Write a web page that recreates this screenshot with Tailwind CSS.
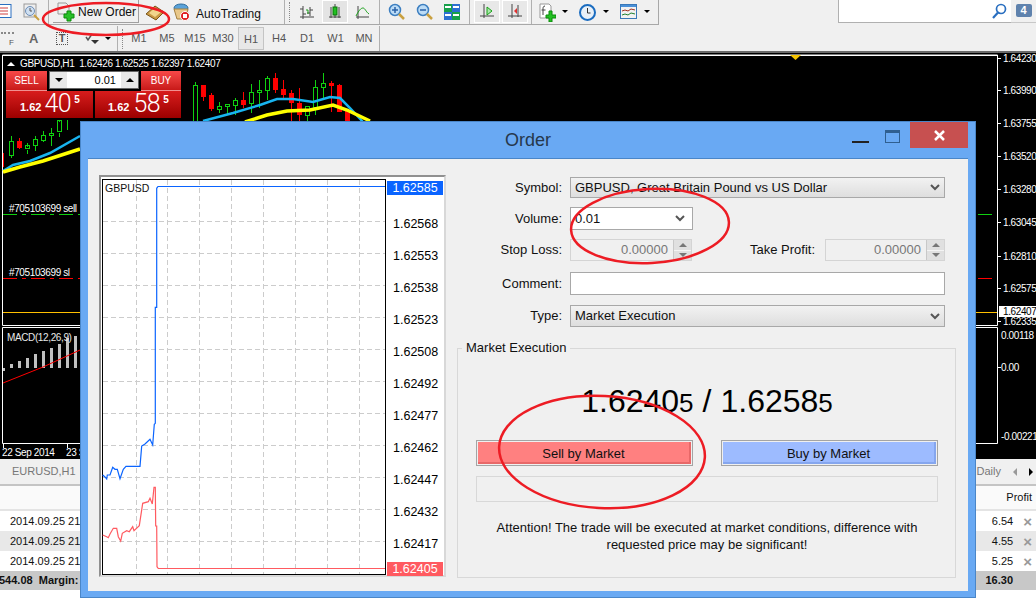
<!DOCTYPE html>
<html lang="en">
<head>
<meta charset="UTF-8">
<title>MetaTrader Order</title>
<script src="https://cdn.jsdelivr.net/npm/@tailwindcss/browser@4"></script>
</head>
<body class="bg-white">
<div class="relative w-[1036px] h-[611px] overflow-hidden bg-white font-['Liberation_Sans',sans-serif] text-[13px] text-[#111]">

  <!-- top toolbar -->
  <div class="flex h-[25px] bg-[#f0f0f0] text-[12px]">
    <div class="flex items-start w-[659px] h-[25px] border-b border-r border-[#a8a8a8] shrink-0">
      <svg class="mt-[4px] shrink-0" width="12" height="15" viewBox="0 0 12 15"><rect x="-4" y="0.5" width="15" height="13" fill="#fff" stroke="#2a6fc0"/><path d="M0 4h8M0 7h8M0 10h8" stroke="#d04040"/></svg>
      <svg class="ml-[11px] mt-[3px] shrink-0" width="18" height="19" viewBox="0 0 18 19"><rect x="1" y="1" width="12" height="13" fill="#eee" stroke="#999"/><circle cx="7" cy="8" r="4.5" fill="#cfe0f2" stroke="#6d8db5"/><path d="M7 5v3h2" stroke="#555" fill="none"/><path d="M11 12l5 5" stroke="#c9a040" stroke-width="2"/></svg>
      <div class="ml-[7px] w-px h-[24px] bg-[#b0b0b0] shrink-0"></div>
      <div class="ml-[4px] flex items-start w-[86px] h-[23px] border-b border-r border-[#a0a0a0] shrink-0">
        <svg class="ml-[4px] mt-[2px] shrink-0" width="18" height="20" viewBox="0 0 18 20"><path d="M1 1h8l3 3v8H1z" fill="#eee" stroke="#999"/><path d="M7 12h3V9h4v3h3v4h-3v3h-4v-3H7z" fill="#28c028" stroke="#0a8a0a"/></svg>
        <span class="ml-[3px] mt-[3px] whitespace-nowrap">New Order</span>
      </div>
      <svg class="ml-[6px] mt-[3px] shrink-0" width="20" height="18" viewBox="0 0 20 18"><path d="M1 11l9-8 9 6-8 8z" fill="#c99a45" stroke="#7a5518"/><path d="M4 10l6-5 6 4-6 5z" fill="#f1d58c"/></svg>
      <svg class="ml-[7px] mt-[3px] shrink-0" width="19" height="19" viewBox="0 0 19 19"><ellipse cx="9" cy="5" rx="7" ry="4" fill="#5aa2d8" stroke="#2f6c9c"/><path d="M2 6h14l-2 10H5z" fill="#e9c88a" stroke="#a5803f"/><circle cx="13" cy="13" r="4.5" fill="#e02020" stroke="#fff"/><rect x="11" y="11" width="4" height="4" fill="#fff"/></svg>
      <span class="ml-[5px] mt-[5px] w-[64px] whitespace-nowrap shrink-0">AutoTrading</span>
      <div class="ml-[24px] w-px h-[24px] bg-[#b0b0b0] shrink-0"></div>
      <div class="ml-[4px] mt-[2px] w-[2px] h-[20px] border-l border-dotted border-[#888] shrink-0"></div>
      <svg class="ml-[8px] mt-[5px] shrink-0" width="16" height="15" viewBox="0 0 16 15"><path d="M4 1v13M1 12h14M11 2v9M4 4H1M4 9h3M11 5h3M11 8H8" stroke="#444" fill="none"/><path d="M7 5h2v4" stroke="#18a018" fill="none"/></svg>
      <div class="ml-[7px] w-[26px] h-[23px] bg-[#e4e4e4] border border-white shrink-0 flex justify-center pt-[3px]">
        <svg width="16" height="15" viewBox="0 0 16 15"><path d="M2 13h12M4 3v11M12 3v11M8 0v3M8 11v3" stroke="#444"/><rect x="6" y="3" width="4" height="8" fill="#20c020" stroke="#0a700a"/></svg>
      </div>
      <svg class="ml-[7px] mt-[5px] shrink-0" width="15" height="15" viewBox="0 0 15 15"><path d="M3 1v13M1 12h13" stroke="#444" fill="none"/><path d="M1 11c3-6 5-8 7-8s3 4 6 6" stroke="#18a018" fill="none"/></svg>
      <div class="ml-[9px] w-px h-[24px] bg-[#b0b0b0] shrink-0"></div>
      <svg class="ml-[8px] mt-[3px] shrink-0" width="17" height="18" viewBox="0 0 17 18"><circle cx="7" cy="7" r="5.5" fill="#bcdcf6" stroke="#3d7fc0" stroke-width="1.5"/><path d="M4 7h6M7 4v6" stroke="#2a62a8" stroke-width="1.5"/><path d="M11 11l5 5" stroke="#c9a040" stroke-width="2.5"/></svg>
      <svg class="ml-[11px] mt-[3px] shrink-0" width="17" height="18" viewBox="0 0 17 18"><circle cx="7" cy="7" r="5.5" fill="#bcdcf6" stroke="#3d7fc0" stroke-width="1.5"/><path d="M4 7h6" stroke="#2a62a8" stroke-width="1.5"/><path d="M11 11l5 5" stroke="#c9a040" stroke-width="2.5"/></svg>
      <svg class="ml-[11px] mt-[4px] shrink-0" width="16" height="16" viewBox="0 0 16 16"><rect width="8" height="8" fill="#17a04a"/><rect x="8" width="8" height="8" fill="#2c6fd0"/><rect y="8" width="8" height="8" fill="#2c6fd0"/><rect x="8" y="8" width="8" height="8" fill="#17a04a"/><path d="M1 3h6M9 3h6M1 11h6M9 11h6" stroke="#fff" stroke-width="2"/></svg>
      <div class="ml-[9px] w-px h-[24px] bg-[#b0b0b0] shrink-0"></div>
      <div class="ml-[4px] w-[26px] h-[23px] bg-[#e8e8e8] border border-white shrink-0 flex justify-center pt-[3px]">
        <svg width="16" height="15" viewBox="0 0 16 15"><path d="M5 0v14M1 12h14" stroke="#444"/><path d="M8 3l5 4-5 4z" fill="#a8e8a8" stroke="#18a018"/></svg>
      </div>
      <div class="ml-[2px] w-[26px] h-[23px] bg-[#e8e8e8] border border-white shrink-0 flex justify-center pt-[3px]">
        <svg width="16" height="15" viewBox="0 0 16 15"><path d="M5 0v14M1 12h14M11 1v12" stroke="#444"/><path d="M7 7l3-3v6z" fill="#e03030"/></svg>
      </div>
      <div class="ml-[3px] w-px h-[24px] bg-[#b0b0b0] shrink-0"></div>
      <svg class="ml-[7px] mt-[3px] shrink-0" width="17" height="19" viewBox="0 0 17 19"><path d="M1 1h9l2 2v12H1z" fill="#fff" stroke="#999"/><path d="M6 3c-2 0-2 2-2 3v6M2.500 7h4" stroke="#444" fill="none"/><path d="M7 12h3V8h3v4h4v3h-4v4h-3v-4H7z" fill="#22c022" stroke="#0a8a0a"/></svg>
      <div class="ml-[6px] mt-[10px] w-0 h-0 border-x-[3px] border-t-[3px] border-x-transparent border-t-black shrink-0"></div>
      <svg class="ml-[11px] mt-[4px] shrink-0" width="17" height="17" viewBox="0 0 17 17"><circle cx="8.5" cy="8.5" r="7.5" fill="#e8f0f8" stroke="#1a6cc0" stroke-width="2"/><path d="M8.5 4v5h3" stroke="#333" fill="none"/></svg>
      <div class="ml-[7px] mt-[10px] w-0 h-0 border-x-[3px] border-t-[3px] border-x-transparent border-t-black shrink-0"></div>
      <svg class="ml-[11px] mt-[4px] shrink-0" width="17" height="15" viewBox="0 0 17 15"><rect x="0.5" y="0.5" width="16" height="14" fill="#f2f2f2" stroke="#3a78b8"/><rect x="1" y="1" width="15" height="2" fill="#4a90d8"/><path d="M2 7l3-1 3 1 3-2 4 1" stroke="#a03020" fill="none"/><path d="M2 11l3-1 3 1 3-2 4 1" stroke="#208030" fill="none"/></svg>
      <div class="ml-[7px] mt-[10px] w-0 h-0 border-x-[3px] border-t-[3px] border-x-transparent border-t-black shrink-0"></div>
    </div>
    <div class="ml-[179px] flex justify-end w-[173px] h-[23px] bg-white border-l border-b border-[#b0b0b0] pt-[3px] pr-[4px] shrink-0">
      <svg width="16" height="16" viewBox="0 0 16 16"><circle cx="10" cy="6" r="4.5" fill="none" stroke="#2a6fc0" stroke-width="1.7"/><path d="M7 9.5L2 15" stroke="#2a6fc0" stroke-width="2.2"/></svg>
    </div>
    <div class="w-[25px] h-[23px] border-b border-[#c8c8c8] flex justify-center pt-[4px]">
      <div class="relative w-[16px] h-[13px] bg-[#5f82ad] rounded-[2px] text-center text-white text-[11px] font-bold leading-[13px]">4</div>
    </div>
  </div>

  <!-- second toolbar -->
  <div class="flex items-center h-[27px] bg-[#f0f0f0] text-[#555]">
    <div class="w-[13px] h-[14px] ml-px border-t-2 border-dotted border-[#888] text-[8px] text-right leading-[18px] shrink-0">F</div>
    <span class="ml-[15px] w-[8px] text-[13px] font-bold text-[#666] shrink-0">A</span>
    <span class="ml-[19px] w-[12px] h-[13px] border border-dotted border-[#555] text-center text-[11px] font-bold leading-[11px] shrink-0">T</span>
    <svg class="ml-[17px] shrink-0" width="14" height="14" viewBox="0 0 14 14"><path d="M1 5l2 3 4-6" stroke="#555" fill="none" stroke-width="1.5"/><path d="M6 8h8l-4 4z" fill="#333"/></svg>
    <div class="ml-[6px] w-0 h-0 border-x-[3px] border-t-[3px] border-x-transparent border-t-black shrink-0"></div>
    <div class="ml-[6px] w-px h-[25px] bg-[#b0b0b0] shrink-0"></div>
    <div class="ml-[4px] w-[2px] h-[20px] border-l border-dotted border-[#888] shrink-0"></div>
    <div class="flex items-center ml-px shrink-0 text-[11px] text-center">
      <span class="w-[28px]">M1</span><span class="w-[28px]">M5</span><span class="w-[28px]">M15</span><span class="w-[28px]">M30</span>
      <span class="w-[26px] h-[23px] leading-[22px] mx-px bg-[#e8e8e8] border border-[#c4c4c4]">H1</span>
      <span class="w-[28px]">H4</span><span class="w-[28px]">D1</span><span class="w-[29px]">W1</span><span class="w-[28px]">MN</span>
    </div>
    <div class="ml-px w-px h-[25px] bg-[#b0b0b0] shrink-0"></div>
  </div>

  <!-- chart window -->
  <div class="relative h-[408px] -mt-px bg-black border-t-2 border-[#6a6a6a] text-white">
    <svg class="absolute left-0 top-0" width="1036" height="406" viewBox="0 53 1036 406" font-size="10" letter-spacing="-0.38">
      <path d="M2.5 55v270.5H997.5V55zM2.5 327.5H997.5V443.500H2.500z" fill="none" stroke="#fff"/>
      <path d="M2.500 55.500H997.500" stroke="#fff"/>
      <path d="M790 55h11l-5.500 5z" fill="#f5c400"/>
      <!-- left candles -->
      <path d="M3.500 153v14" stroke="#f00"/>
      <g fill="none" stroke="#10d010">
        <path d="M11.500 136v5M11.500 156v2"/><rect x="9.500" y="141.500" width="4" height="14"/>
        <path d="M27.500 143v4M27.500 150v4"/><rect x="25.500" y="145.500" width="4" height="3"/>
        <path d="M35.500 136v3M35.500 146v5"/><rect x="33.500" y="139.500" width="4" height="6"/>
        <path d="M43.500 131v4M43.500 140v2"/><rect x="41.500" y="135.500" width="4" height="5"/>
        <path d="M51.500 128v5M51.500 136v10"/><rect x="49.500" y="133.500" width="4" height="2"/>
        <path d="M59.500 120v2M59.500 133v4"/><rect x="57.500" y="120.500" width="4" height="11"/>
        <path d="M67.500 120v10"/>
      </g>
      <path d="M19.500 138v3M19.500 147v2" stroke="#f00"/><rect x="17" y="141" width="5" height="7" fill="#f00"/>
      <polyline points="3,171 13,165 30,161 50,153 80,136" fill="none" stroke="#18b4f0" stroke-width="2.500"/>
      <polyline points="3,172 20,167 43,161 80,149" fill="none" stroke="#ffff00" stroke-width="3.500"/>
      <!-- right candles -->
      <g fill="none" stroke="#10d010">
        <rect x="193.500" y="85.500" width="4" height="37"/><path d="M195.500 82v3"/>
        <path d="M219.500 102v4M219.500 110v3"/><rect x="217.500" y="106.500" width="4" height="3"/>
        <path d="M227.500 107v8"/><rect x="225.500" y="104.500" width="4" height="2"/>
        <path d="M235.500 98v2M235.500 106v9"/><rect x="233.500" y="100.500" width="4" height="5"/>
        <path d="M251.500 84v8M251.500 104v9"/><rect x="249.500" y="92.500" width="4" height="11"/>
        <path d="M259.500 80v10M259.500 93v15"/><rect x="257.500" y="90.500" width="4" height="2"/>
        <path d="M267.500 76v2M267.500 90v10"/><rect x="265.500" y="78.500" width="4" height="12"/>
        <path d="M307.500 116v6"/><rect x="305.500" y="106.500" width="4" height="9"/>
        <path d="M315.500 80v7M315.500 108v7"/><rect x="313.500" y="87.500" width="4" height="20"/>
        <path d="M323.500 73v10M323.500 88v10"/><rect x="321.500" y="83.500" width="4" height="4"/>
      </g>
      <g stroke="#f00">
        <path d="M203.500 85v16M211.500 93v18M243.500 92v16M275.500 73v20M283.500 80v20M291.500 90v32M299.500 88v34M331.500 81v31M339.500 84v28M347.500 111v11"/>
      </g>
      <g fill="#f00">
        <rect x="201" y="85" width="5" height="12"/><rect x="209" y="95" width="5" height="14"/><rect x="241" y="100" width="5" height="5"/><rect x="273" y="78" width="5" height="12"/><rect x="281" y="89" width="5" height="6"/><rect x="289" y="93" width="5" height="10"/><rect x="297" y="103" width="5" height="12"/><rect x="329" y="83" width="5" height="3"/><rect x="337" y="85" width="5" height="27"/><rect x="345" y="111" width="5" height="11"/>
      </g>
      <polyline points="203,121 233,113 260,105 277,99 293,99 313,102 330,97 340,98 350,108 363,122" fill="none" stroke="#18b4f0" stroke-width="2.500"/>
      <polyline points="245,122 267,115 287,111 310,110 333,105 347,110 370,121" fill="none" stroke="#ffff00" stroke-width="3.500"/>
      <!-- order lines -->
      <path d="M3 214.500H80M978 214.500H997" stroke="#10d010" stroke-dasharray="14 5 4 5"/>
      <path d="M3 278.500H80M978 278.500H997" stroke="#f00" stroke-dasharray="14 5 4 5"/>
      <path d="M3 312.500H997" stroke="#ffc000"/>
      <text x="9" y="212" fill="#fff">#705103699 sell</text>
      <text x="9" y="276" fill="#fff">#705103699 sl</text>
      <!-- macd -->
      <g fill="#c0c0c0">
        <rect x="3" y="368" width="2" height="3"/><rect x="10" y="364" width="3" height="4"/><rect x="18" y="361" width="3" height="7"/><rect x="26" y="358" width="3" height="10"/><rect x="34" y="354" width="3" height="14"/><rect x="42" y="351" width="3" height="17"/><rect x="50" y="348" width="3" height="20"/><rect x="58" y="344" width="3" height="24"/><rect x="66" y="338" width="3" height="30"/><rect x="74" y="336" width="3" height="32"/>
      </g>
      <polyline points="3,383 43,367 80,350" fill="none" stroke="#f00"/>
      <text x="7" y="341" fill="#e8e8e8">MACD(12,26,9)</text>
      <path d="M3.500 443v5M67.500 443v5" stroke="#fff"/>
      <text x="2" y="456" fill="#fff">22 Sep 2014</text>
      <text x="66" y="456" fill="#fff">23 Sep</text>
      <!-- price axis -->
      <path d="M998 58.500h3M998 90.500h3M998 123.500h3M998 156.500h3M998 189.500h3M998 222.500h3M998 256.500h3M998 288.500h3M998 321.500h3M998 367.500h3" stroke="#fff"/>
      <rect x="999" y="306" width="37" height="11" fill="#fff"/>
      <g fill="#fff">
        <text x="1003" y="62">1.64230</text><text x="1003" y="94">1.63990</text><text x="1003" y="127">1.63755</text><text x="1003" y="160">1.63520</text><text x="1003" y="193">1.63280</text><text x="1003" y="226">1.63045</text><text x="1003" y="260">1.62810</text><text x="1003" y="292">1.62575</text>
        <text x="1003" y="325">1.62335</text><text x="1001" y="339">0.00118</text><text x="1001" y="371">0.00</text><text x="1001" y="440">-0.00221</text>
      </g>
      <text x="1003" y="315" fill="#000">1.62407</text>
    </svg>

    <!-- chart caption -->
    <div class="absolute left-[7px] top-[3px] flex items-center gap-[5px] text-[10px] tracking-[-0.38px] whitespace-nowrap">
      <div class="w-0 h-0 border-x-[4px] border-b-[4px] border-x-transparent border-b-white"></div>
      <span>GBPUSD,H1&nbsp;&nbsp;1.62426 1.62525 1.62397 1.62407</span>
    </div>

    <!-- one click trading -->
    <div class="absolute left-[6px] top-[18px] w-[175px]">
      <div class="flex h-[20px]">
        <div class="w-[41px] h-[20px] bg-gradient-to-b from-[#f84848] to-[#c81818] text-center text-[10px] leading-[20px] border-b border-[#f09090]">SELL</div>
        <div class="flex w-[90px] h-[18px] ml-[2px] border border-[#666] bg-[#e8e8e8] text-black">
          <div class="w-[17px] flex items-center justify-center"><div class="w-0 h-0 border-x-[4px] border-t-[4px] border-x-transparent border-t-black"></div></div>
          <div class="w-[54px] bg-white text-right pr-[5px] text-[11px] leading-[16px]">0.01</div>
          <div class="w-[17px] flex items-center justify-center"><div class="w-0 h-0 border-x-[4px] border-b-[4px] border-x-transparent border-b-black"></div></div>
        </div>
        <div class="w-[40px] h-[20px] ml-[2px] bg-gradient-to-b from-[#f84848] to-[#c81818] text-center text-[10px] leading-[20px] border-b border-[#f09090]">BUY</div>
      </div>
      <div class="flex justify-between h-[27px]">
        <div class="flex items-start w-[87px] h-[27px] bg-gradient-to-b from-[#d81c1c] to-[#9c0000] pl-[14px] whitespace-nowrap">
          <span class="mt-[8px] text-[11px] font-bold">1.62</span><span class="ml-[3px] -mt-[2px] font-['Roboto'] font-light text-[25px] leading-[30px] tracking-[-0.5px]">40</span><span class="ml-[3px] mt-[1px] text-[10px] font-bold">5</span>
        </div>
        <div class="flex items-start w-[86px] h-[27px] bg-gradient-to-b from-[#d81c1c] to-[#9c0000] pl-[13px] whitespace-nowrap">
          <span class="mt-[8px] text-[11px] font-bold">1.62</span><span class="ml-[4px] -mt-[2px] font-['Roboto'] font-light text-[25px] leading-[30px] tracking-[-0.5px]">58</span><span class="ml-[3px] mt-[1px] text-[10px] font-bold">5</span>
        </div>
      </div>
    </div>
  </div>

  <!-- tabs -->
  <div class="flex items-center justify-between h-[27px] bg-[#f0f0f0] border-b-2 border-[#c4c4c4] text-[#777] text-[11px] px-[12px]">
    <span>EURUSD,H1</span>
    <div class="flex items-center gap-[12px] -mr-[9px]">
      <span>D,Daily</span><div class="w-0 h-0 border-y-[4px] border-r-[4px] border-y-transparent border-r-[#999]"></div><div class="w-0 h-0 border-y-[4px] border-l-[4px] border-y-transparent border-l-black"></div>
    </div>
  </div>

  <!-- trade table -->
  <div class="text-[11px]">
    <div class="flex justify-end items-center h-[25px] pr-[4px] border-b-2 border-[#e4e4e4] bg-[#fafafa]">Profit</div>
    <div class="flex items-center justify-between h-[20px] bg-white pl-[10px] pr-[4px]"><span>2014.09.25 21:00</span><span class="flex items-center gap-[10px]">6.54 <span class="text-[#999] text-[15px] font-bold leading-[15px]">×</span></span></div>
    <div class="flex items-center justify-between h-[20px] bg-[#e8e8e8] pl-[10px] pr-[4px]"><span>2014.09.25 21:00</span><span class="flex items-center gap-[10px]">4.55 <span class="text-[#999] text-[15px] font-bold leading-[15px]">×</span></span></div>
    <div class="flex items-center justify-between h-[20px] bg-white pl-[10px] pr-[4px]"><span>2014.09.25 21:00</span><span class="flex items-center gap-[10px]">5.25 <span class="text-[#999] text-[15px] font-bold leading-[15px]">×</span></span></div>
    <div class="flex items-center justify-between h-[19px] bg-[#c8c8c8] font-bold pr-[23px]"><span class="-ml-[1px]">544.08&nbsp;&nbsp;Margin:</span><span>16.30</span></div>
  </div>

  <!-- order dialog -->
  <div class="absolute left-[80px] top-[121px] w-[896px] h-[477px] bg-[#69a9f3] border border-[#4a86c8] px-[7px]">
    <div class="relative flex items-center justify-center h-[36px] text-[18px] text-[#26384c]">
      Order
      <div class="absolute left-[764px] top-[19px] w-[17px] h-[2px] bg-[#222]"></div>
      <div class="absolute left-[797px] top-[8px] w-[15px] h-[13px] border border-[#2f5f90] border-t-[3px]"></div>
      <div class="absolute left-[822px] top-0 w-[58px] h-[26px] bg-[#c75050] flex items-center justify-center">
        <svg width="11" height="11" viewBox="0 0 11 11"><path d="M1 1l9 9M10 1l-9 9" stroke="#fff" stroke-width="2.500"/></svg>
      </div>
    </div>
    <div class="flex h-[433px] bg-[#f0f0f0] border-t border-[#4a86c8]">

      <!-- tick chart -->
      <div class="flex ml-[11px] mt-[16px] w-[347px] h-[402px] border-2 border-[#d8d8d8] border-l-[#909090] border-t-[#909090] shrink-0 bg-white">
        <svg class="ml-[1px] mt-[2px] shrink-0" width="284" height="396" viewBox="102 179 284 396">
          <rect x="102.500" y="179.500" width="283" height="395" fill="#fff" stroke="#000"/>
          <path d="M136.500 180V574M167.500 180V574M199.500 180V574M231.500 180V574M263.500 180V574M295.500 180V574M327.500 180V574M359.500 180V574M103 221.500H385M103 253.500H385M103 285.500H385M103 317.500H385M103 349.500H385M103 381.500H385M103 413.500H385M103 445.500H385M103 477.500H385M103 509.500H385M103 541.500H385" stroke="#ccc" stroke-dasharray="5 3" fill="none"/>
          <polyline points="102.700,475 104.700,476.700 106.700,479 107.300,475 110,475 112.700,467.300 115,469.300 117.300,469.300 120,478.700 123.300,469.300 126,466.300 140,466.300 141.700,446 145,444 150,439.300 152.700,445 154.300,424.300 155.300,423.300 155.300,307.300 156.700,307.300 156.700,188.300 158,186.500 385,186.500" fill="none" stroke="#0a64ff" stroke-width="1.200"/>
          <polyline points="102.700,535 106.700,536.700 108.300,537.700 110,534 113.300,528.300 116.700,528.300 118.300,536.700 120.700,541 122.300,533.300 126.700,530.700 129.300,531.700 132.700,526.700 134,530.700 139.300,525.700 142.700,503.300 148.300,501.700 150,498.300 152.300,504 154,487.300 155.300,487.300 155.700,526 156.700,526 157,566.700 158.300,568.500 385,568.500" fill="none" stroke="#ff5a60" stroke-width="1.200"/>
          <text x="105" y="192" font-size="10.500" fill="#111">GBPUSD</text>
        </svg>
        <div class="relative w-[60px] text-[12.500px] text-black">
          <div class="absolute left-[1px] top-[4px] w-[56px] h-[14px] bg-[#0a64ff] text-white text-center leading-[14px]">1.62585</div>
          <div class="absolute left-[1px] bottom-[-1px] w-[56px] h-[14px] bg-[#ff5a60] text-white text-center leading-[14px]">1.62405</div>
          <div class="flex flex-col pt-[31px] pl-[7px] leading-[32px]">
            <span>1.62568</span><span>1.62553</span><span>1.62538</span><span>1.62523</span><span>1.62508</span><span>1.62492</span><span>1.62477</span><span>1.62462</span><span>1.62447</span><span>1.62432</span><span>1.62417</span>
          </div>
        </div>
      </div>

      <!-- order form -->
      <div class="ml-[11px] mt-[18px] w-[499px] shrink-0">
        <div class="flex items-center h-[21px]">
          <label class="w-[105px] text-right">Symbol:</label>
          <div class="flex items-center justify-between ml-[8px] w-[375px] h-[21px] px-[4px] bg-gradient-to-b from-[#f2f2f2] to-[#dedede] border border-[#a8a8a8]">GBPUSD, Great Britain Pound vs US Dollar
            <svg width="10" height="7" viewBox="0 0 10 7"><path d="M1 1l4 4 4-4" fill="none" stroke="#555" stroke-width="2"/></svg></div>
        </div>
        <div class="flex items-center h-[23px] mt-[9px]">
          <label class="w-[105px] text-right">Volume:</label>
          <div class="flex items-center justify-between ml-[8px] w-[123px] h-[23px] px-[4px] bg-white border border-[#a8a8a8]">0.01
            <svg class="mr-[3px]" width="10" height="7" viewBox="0 0 10 7"><path d="M1 1l4 4 4-4" fill="none" stroke="#555" stroke-width="2"/></svg></div>
        </div>
        <div class="flex items-center h-[22px] mt-[9px]">
          <label class="w-[105px] text-right">Stop Loss:</label>
          <div class="flex ml-[8px] w-[122px] h-[22px] bg-[#f0f0f0] border border-[#d4d4d4] text-[#777]">
            <span class="flex-1 text-right pr-[5px] leading-[20px]">0.00000</span>
            <div class="flex flex-col w-[18px] bg-[#e0e0e0] border-l border-[#c8c8c8]">
              <div class="flex-1 flex items-center justify-center border-b border-[#f4f4f4]"><div class="w-0 h-0 border-x-[4px] border-b-[4px] border-x-transparent border-b-[#777]"></div></div>
              <div class="flex-1 flex items-center justify-center"><div class="w-0 h-0 border-x-[4px] border-t-[4px] border-x-transparent border-t-[#777]"></div></div>
            </div>
          </div>
          <label class="w-[123px] text-right">Take Profit:</label>
          <div class="flex ml-[10px] w-[120px] h-[22px] bg-[#f0f0f0] border border-[#d4d4d4] text-[#777]">
            <span class="flex-1 text-right pr-[5px] leading-[20px]">0.00000</span>
            <div class="flex flex-col w-[18px] bg-[#e0e0e0] border-l border-[#c8c8c8]">
              <div class="flex-1 flex items-center justify-center border-b border-[#f4f4f4]"><div class="w-0 h-0 border-x-[4px] border-b-[4px] border-x-transparent border-b-[#777]"></div></div>
              <div class="flex-1 flex items-center justify-center"><div class="w-0 h-0 border-x-[4px] border-t-[4px] border-x-transparent border-t-[#777]"></div></div>
            </div>
          </div>
        </div>
        <div class="flex items-center h-[23px] mt-[11px]">
          <label class="w-[105px] text-right">Comment:</label>
          <div class="ml-[8px] w-[375px] h-[23px] bg-white border border-[#a8a8a8]"></div>
        </div>
        <div class="flex items-center h-[22px] mt-[10px]">
          <label class="w-[105px] text-right">Type:</label>
          <div class="flex items-center justify-between ml-[8px] w-[375px] h-[22px] px-[4px] bg-gradient-to-b from-[#f2f2f2] to-[#dedede] border border-[#a8a8a8]">Market Execution
            <svg width="10" height="7" viewBox="0 0 10 7"><path d="M1 1l4 4 4-4" fill="none" stroke="#555" stroke-width="2"/></svg></div>
        </div>

        <div class="relative mt-[21px] w-[499px] h-[230px] border border-[#d8d8d8] pl-[18px] pr-[17px]">
          <span class="absolute left-[4px] -top-[8px] px-[4px] bg-[#f0f0f0] leading-[14px]">Market Execution</span>
          <div class="flex items-baseline justify-center mt-[32px] h-[40px] text-[32px] leading-[40px] text-black">1.6240<span class="text-[26px]">5</span><span class="mx-[9px]">/</span>1.6258<span class="text-[26px]">5</span></div>
          <div class="flex justify-between mt-[19px]">
            <div class="w-[217px] h-[26px] border border-[#a4a4a4] p-px"><div class="h-full bg-[#ff8080] border-b-2 border-r-2 border-[#e86868] text-center leading-[23px]">Sell by Market</div></div>
            <div class="w-[217px] h-[26px] border border-[#a4a4a4] p-px"><div class="h-full bg-[#9dbbff] border-b-2 border-r-2 border-[#85a6ee] text-center leading-[23px]">Buy by Market</div></div>
          </div>
          <div class="mt-[10px] h-[26px] border border-[#d8d8d8]"></div>
          <p class="mt-[17px] text-center leading-[17px]">Attention! The trade will be executed at market conditions, difference with<br>requested price may be significant!</p>
        </div>
      </div>
    </div>
  </div>

  <!-- hand drawn marks -->
  <svg class="absolute left-0 top-0 pointer-events-none" width="1036" height="611" viewBox="0 0 1036 611" fill="none" stroke="#ed1c24" stroke-width="2.500">
    <ellipse cx="106" cy="19" rx="63" ry="16"/>
    <ellipse cx="650" cy="226" rx="79" ry="37" transform="rotate(-3 650 226)"/>
    <ellipse cx="602" cy="452" rx="103" ry="56" transform="rotate(3 602 452)"/>
  </svg>
</div>
</body>
</html>
